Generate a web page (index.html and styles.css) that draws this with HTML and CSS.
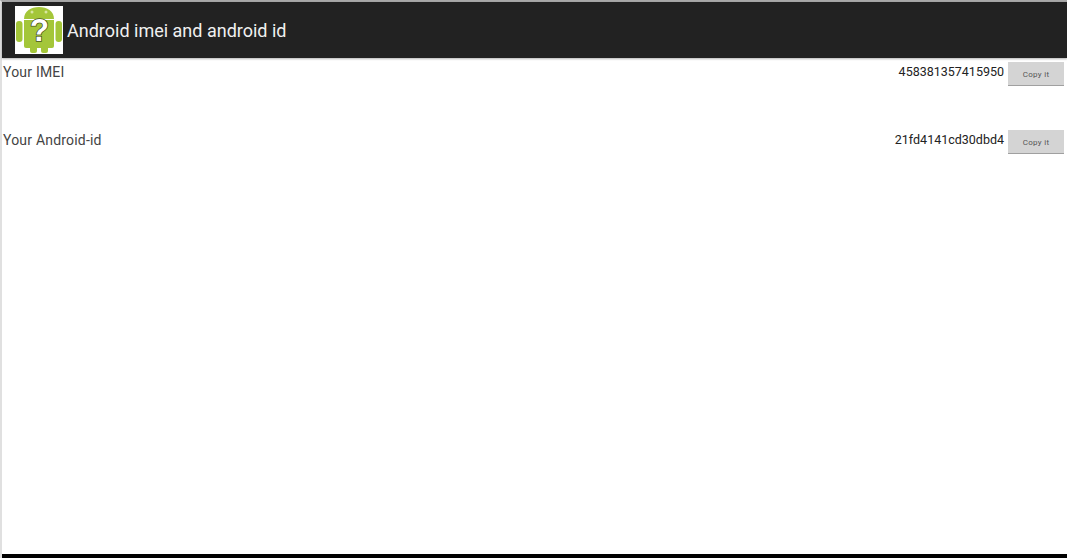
FILE: index.html
```html
<!DOCTYPE html>
<html lang="en">
<head>
    <meta charset="UTF-8">
    <title>Android imei and android id</title>
    <link rel="stylesheet" href="styles.css">
</head>
<body>
    <div class="screen">
        <header class="action-bar">
            <div class="app-icon">
                <svg width="48" height="48" viewBox="0 0 48 48">
                    <rect width="48" height="48" fill="#fff"/>
                    <rect x="1" y="15" width="6.5" height="21" rx="3" fill="#a4c639"/>
                    <rect x="40.5" y="15" width="6.5" height="21" rx="3" fill="#a4c639"/>
                    <path d="M9 13 C9 5 16 1 24 1 C32 1 39 5 39 13 Z" fill="#a4c639"/>
                    <circle cx="17" cy="6" r="1.5" fill="#d8e6a0"/>
                    <circle cx="31" cy="6" r="1.5" fill="#d8e6a0"/>
                    <path d="M9 14 H39 V40 Q39 42 37 42 H11 Q9 42 9 40 Z" fill="#a4c639"/>
                    <rect x="15" y="40" width="7" height="7" rx="2" fill="#a4c639"/>
                    <rect x="26" y="40" width="7" height="7" rx="2" fill="#a4c639"/>
                    <text class="icon-mark" x="24.5" y="35" text-anchor="middle">?</text>
                </svg>
            </div>
            <h1 class="app-title">Android imei and android id</h1>
        </header>
        <main class="content">
            <div class="row">
                <span class="label">Your IMEI</span>
                <span class="value">458381357415950</span>
                <button class="copy-btn">Copy it</button>
            </div>
            <div class="row">
                <span class="label">Your Android-id</span>
                <span class="value">21fd4141cd30dbd4</span>
                <button class="copy-btn">Copy it</button>
            </div>
        </main>
        <div class="nav-bar"></div>
    </div>
</body>
</html>
```
FILE: styles.css
```css
* {
    margin: 0;
    padding: 0;
    box-sizing: border-box;
}

body {
    font-family: Roboto, sans-serif;
    background: #fff;
    overflow: hidden;
}

.screen {
    height: 558px;
    display: flex;
    flex-direction: column;
    border-top: 2px solid #a8a8a8;
    border-left: 2px solid #e0e0e0;
}

.action-bar {
    height: 56px;
    flex-shrink: 0;
    background: #222;
    display: flex;
    align-items: center;
    gap: 4px;
    padding-left: 13px;
    box-shadow: 0 1px 2px rgba(0, 0, 0, 0.3);
    position: relative;
}

.app-icon {
    width: 48px;
    height: 48px;
    line-height: 0;
}

.icon-mark {
    font-family: "Liberation Sans", sans-serif;
    font-size: 31px;
    font-weight: 700;
    fill: #fff;
    stroke: #4a5520;
    stroke-width: 1.6px;
    paint-order: stroke;
}

.app-title {
    font-size: 18px;
    font-weight: 400;
    color: #f0f0f0;
}

.content {
    flex: 1;
    padding-top: 4px;
    display: flex;
    flex-direction: column;
    gap: 44px;
}

.row {
    height: 24px;
    display: flex;
    align-items: flex-start;
    padding: 0 3px 0 1px;
}

.label {
    flex: 1;
    font-size: 14px;
    line-height: 20px;
    letter-spacing: 0.2px;
    color: #444;
}

.value {
    font-size: 12.5px;
    line-height: 20px;
    color: #222;
    margin-right: 4px;
}

.copy-btn {
    width: 56px;
    height: 24px;
    font-family: Roboto, sans-serif;
    font-size: 8px;
    letter-spacing: 0.3px;
    color: #555;
    background: #d4d4d4;
    border: none;
    border-bottom: 1px solid #a0a0a0;
    padding-top: 2px;
}

.nav-bar {
    height: 4px;
    flex-shrink: 0;
    background: #000;
}
```
